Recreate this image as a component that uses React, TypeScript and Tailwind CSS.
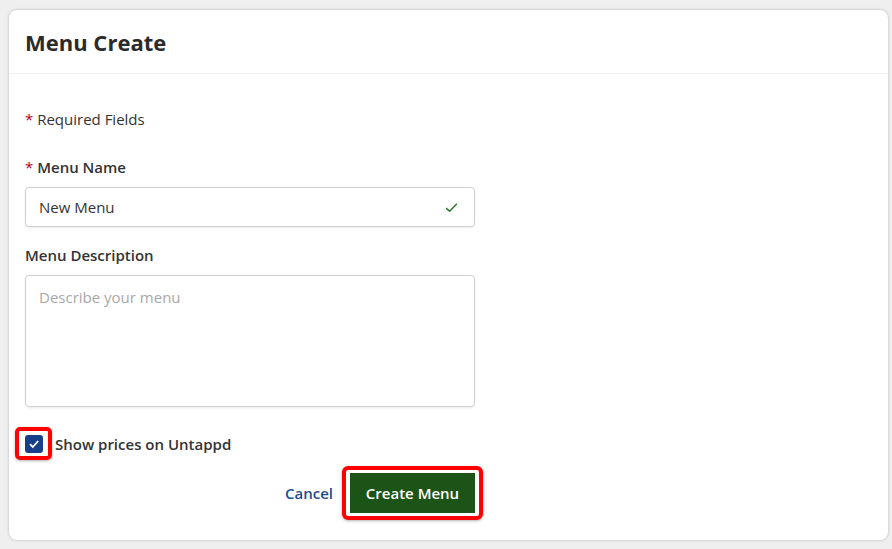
export default function App() {
  return (
    <div
      className="min-h-[549px] w-full bg-[#efefef] pt-[10px] pr-[4px] pb-[9px] pl-[9px]"
      style={{ fontFamily: '"Open Sans", "Noto Sans", sans-serif' }}
    >
      <div className="flex h-[530px] flex-col rounded-[8px] bg-white shadow-[0_0_3px_rgba(0,0,0,0.25)]">
        {/* Header */}
        <div className="flex h-[64px] items-center border-b border-[#f0f0f0] px-[16px]">
          <h1 className="text-[22px] leading-[28px] font-bold text-[#2b2b2b]">Menu Create</h1>
        </div>

        <div className="flex w-[466px] flex-col pl-[16px]">
          <p className="mt-[35px] text-[15px] leading-[20px] text-[#333]">
            <span className="text-[#b00020]">*</span> Required Fields
          </p>

          <label className="mt-[28px] text-[15px] leading-[20px] font-semibold text-[#333]">
            <span className="font-normal text-[#b00020]">*</span> Menu Name
          </label>
          <div className="mt-[10px] flex h-[40px] items-center justify-between rounded-[4px] border border-[#cfcfcf] px-[13px] shadow-[0_1px_2px_rgba(0,0,0,0.08)]">
            <span className="text-[15px] leading-[20px] text-[#333]">New Menu</span>
            <svg width="15" height="15" viewBox="0 0 14 14" className="mr-[2px]">
              <path d="M2 7.5 L5.3 10.5 L12 3.5" fill="none" stroke="#2e7d32" strokeWidth="1.5" />
            </svg>
          </div>

          <label className="mt-[18px] text-[15px] leading-[20px] font-semibold text-[#333]">Menu Description</label>
          <div className="mt-[10px] h-[132px] rounded-[4px] border border-[#cfcfcf] px-[13px] pt-[9px] shadow-[0_1px_2px_rgba(0,0,0,0.08)]">
            <span className="text-[15px] leading-[20px] text-[#a8a8a8]">Describe your menu</span>
          </div>

          <div className="mt-[20px] flex items-center">
            <div className="-ml-[10px] flex h-[33px] w-[37px] items-center justify-center rounded-[5px] border-[4px] border-[#ff0000] shadow-[0_1px_3px_rgba(0,0,0,0.3)]">
              <div className="flex h-[18px] w-[18px] items-center justify-center rounded-[3px] bg-[#173f8a]">
                <svg width="12" height="12" viewBox="0 0 12 12">
                  <path d="M2 6.2 L4.8 9 L10.2 3" fill="none" stroke="white" strokeWidth="1.8" />
                </svg>
              </div>
            </div>
            <span className="ml-[3px] text-[15px] leading-[20px] font-semibold text-[#333]">Show prices on Untappd</span>
          </div>

          <div className="mt-[6px] flex items-center justify-end">
            <button className="mr-[9px] text-[15px] leading-[20px] font-semibold text-[#1d4b8f]">Cancel</button>
            <div className="-mr-[8px] rounded-[6px] border-[4px] border-[#ff0000] px-[4px] py-[3px] shadow-[0_1px_3px_rgba(0,0,0,0.3)]">
              <button className="flex h-[40px] w-[125px] items-center justify-center bg-[#1b5416] text-[15px] font-semibold text-white">
                Create Menu
              </button>
            </div>
          </div>
        </div>
      </div>
    </div>
  );
}
